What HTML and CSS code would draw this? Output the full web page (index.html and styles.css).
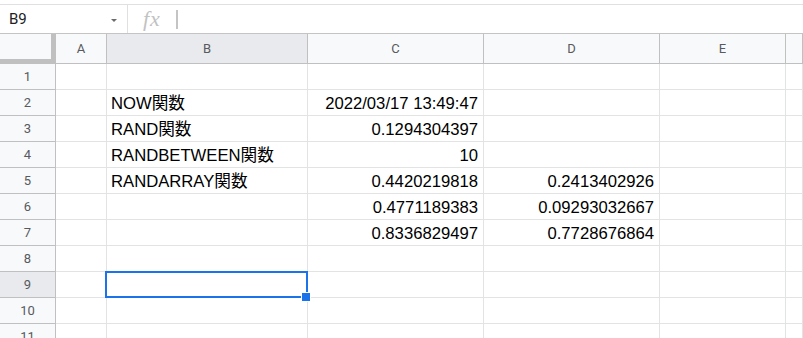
FILE: index.html
```html
<!DOCTYPE html>
<html lang="ja">
<head>
<meta charset="utf-8">
<title>Sheet</title>
<link rel="stylesheet" href="styles.css">
</head>
<body>
<div class="sheet">
  <div class="top-strip"></div>
  <div class="formula-bar">
    <div class="name-box"><span class="name">B9</span><span class="caret"></span></div>
    <div class="fx-area"><span class="fx">fx</span><span class="cursor"></span></div>
  </div>
  <div class="grid">
    <div class="corner"></div>
    <div class="col-h">A</div>
    <div class="col-h sel">B</div>
    <div class="col-h">C</div>
    <div class="col-h">D</div>
    <div class="col-h">E</div>
    <div class="col-h"></div>

    <div class="row-h">1</div><div class="c"></div><div class="c"></div><div class="c"></div><div class="c"></div><div class="c"></div><div class="c"></div>
    <div class="row-h">2</div><div class="c"></div><div class="c t">NOW関数</div><div class="c n">2022/03/17 13:49:47</div><div class="c"></div><div class="c"></div><div class="c"></div>
    <div class="row-h">3</div><div class="c"></div><div class="c t">RAND関数</div><div class="c n">0.1294304397</div><div class="c"></div><div class="c"></div><div class="c"></div>
    <div class="row-h">4</div><div class="c"></div><div class="c t">RANDBETWEEN関数</div><div class="c n">10</div><div class="c"></div><div class="c"></div><div class="c"></div>
    <div class="row-h">5</div><div class="c"></div><div class="c t">RANDARRAY関数</div><div class="c n">0.4420219818</div><div class="c n">0.2413402926</div><div class="c"></div><div class="c"></div>
    <div class="row-h">6</div><div class="c"></div><div class="c"></div><div class="c n">0.4771189383</div><div class="c n">0.09293032667</div><div class="c"></div><div class="c"></div>
    <div class="row-h">7</div><div class="c"></div><div class="c"></div><div class="c n">0.8336829497</div><div class="c n">0.7728676864</div><div class="c"></div><div class="c"></div>
    <div class="row-h">8</div><div class="c"></div><div class="c"></div><div class="c"></div><div class="c"></div><div class="c"></div><div class="c"></div>
    <div class="row-h sel">9</div><div class="c"></div><div class="c active"><span class="sel-box"></span><span class="handle"></span></div><div class="c"></div><div class="c"></div><div class="c"></div><div class="c"></div>
    <div class="row-h">10</div><div class="c"></div><div class="c"></div><div class="c"></div><div class="c"></div><div class="c"></div><div class="c"></div>
    <div class="row-h">11</div><div class="c"></div><div class="c"></div><div class="c"></div><div class="c"></div><div class="c"></div><div class="c"></div>
  </div>
</div>
</body>
</html>
```

FILE: styles.css
```css
html, body {
  margin: 0;
  padding: 0;
  background: #fff;
  overflow: hidden;
}
body {
  width: 803px;
  height: 338px;
}
.sheet {
  width: 803px;
  height: 338px;
  overflow: hidden;
}
.top-strip {
  height: 4px;
  border-bottom: 1px solid #e0e0e0;
}
.formula-bar {
  display: flex;
  height: 28px;
  border-bottom: 1px solid #c4c4c4;
}
.name-box {
  box-sizing: border-box;
  width: 128px;
  border-right: 1px solid #e0e0e0;
  display: flex;
  align-items: center;
  padding-left: 9px;
}
.name {
  font-family: Roboto, "Liberation Sans", Arial, sans-serif;
  font-size: 15px;
  color: #202124;
  flex: 1;
}
.caret {
  width: 0;
  height: 0;
  border-left: 3px solid transparent;
  border-right: 3px solid transparent;
  border-top: 3px solid #6b6b6b;
  margin-right: 10px;
  margin-top: 2px;
}
.fx-area {
  display: flex;
  align-items: center;
  padding-left: 15px;
}
.fx {
  font-family: "Liberation Serif", "Times New Roman", serif;
  font-style: italic;
  font-size: 22px;
  color: #c2c2c2;
  letter-spacing: 1px;
  line-height: 28px;
}
.cursor {
  width: 2px;
  height: 19px;
  background: #c4c4c4;
  margin-left: 15px;
}
.grid {
  display: grid;
  grid-template-columns: 56px 51px 201px 176px 176px 126px 1fr;
  grid-template-rows: 30px repeat(11, 26px);
}
.corner {
  box-sizing: border-box;
  background: #f8f9fa;
  border-right: 5px solid #c0c0c0;
  border-bottom: 5px solid #c0c0c0;
}
.col-h, .row-h {
  box-sizing: border-box;
  background: #f8f9fa;
  border-right: 1px solid #c0c0c0;
  border-bottom: 1px solid #c0c0c0;
  display: flex;
  align-items: center;
  justify-content: center;
  font-family: Roboto, "Liberation Sans", Arial, sans-serif;
  font-size: 13px;
  color: #575a5e;
}
.col-h.sel, .row-h.sel {
  background: #e8eaed;
}
.c {
  box-sizing: border-box;
  border-right: 1px solid #e2e3e3;
  border-bottom: 1px solid #e2e3e3;
  display: flex;
  align-items: flex-end;
  font-family: "Liberation Sans", Arial, "Noto Sans CJK JP", sans-serif;
  font-size: 16.67px;
  line-height: 19px;
  color: #000;
  white-space: nowrap;
  padding-bottom: 2px;
}
.c.t {
  padding-left: 4px;
}
.c.n {
  justify-content: flex-end;
  padding-right: 5px;
}
.c.active {
  position: relative;
}
.sel-box {
  position: absolute;
  left: -2px;
  top: -1px;
  width: 203px;
  height: 27px;
  box-sizing: border-box;
  border: 2px solid #1a73e8;
}
.handle {
  position: absolute;
  left: 194px;
  top: 20px;
  width: 10px;
  height: 10px;
  box-sizing: border-box;
  background: #1a73e8;
  border: 1px solid #fff;
}
```
